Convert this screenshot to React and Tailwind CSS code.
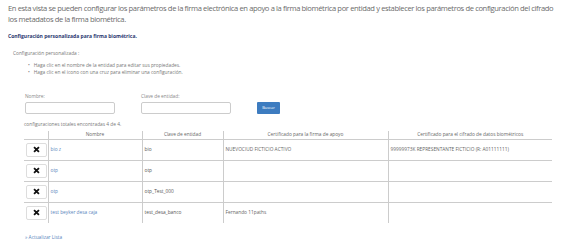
import React from "react";

const rows = [
  { name: "bio z", clave: "bio", firma: "NUEVOCIUD FICTICIO ACTIVO", cifrado: "99999973K REPRESENTANTE FICTICIO (R: A01111111)" },
  { name: "otp", clave: "otp", firma: "", cifrado: "" },
  { name: "otp", clave: "otp_Test_000", firma: "", cifrado: "" },
  { name: "test beyker desa caja", clave: "test_desa_banco", firma: "Fernando 11paths", cifrado: "" },
];

function XIcon() {
  return (
    <svg width="7" height="7" viewBox="0 0 10 10">
      <path d="M1.5 1.5 L8.5 8.5 M8.5 1.5 L1.5 8.5" stroke="#111" strokeWidth="2.6" strokeLinecap="butt" />
    </svg>
  );
}

export default function App() {
  return (
    <div className="w-[565px] h-[241px] bg-white overflow-hidden pl-[8px] pt-[3px]" style={{ fontFamily: '"Open Sans", sans-serif' }}>
      <p className="text-[7.6px] tracking-[-0.38px] leading-[10.5px] text-[#6b6b6b] whitespace-nowrap">
        En esta vista se pueden configurar los parámetros de la firma electrónica en apoyo a la firma biométrica por entidad y establecer los parámetros de configuración del cifrado
        <br />
        los metadatos de la firma biométrica.
      </p>
      <p className="mt-[9px] text-[5px] leading-[6px] font-bold text-[#2a3770]">Configuración personalizada para firma biométrica.</p>
      <p className="mt-[11px] ml-[5px] text-[4.8px] leading-[6px] text-[#777]">Configuración personalizada :</p>
      <ul className="mt-[6px] ml-[20px] text-[4.8px] leading-[6.5px] text-[#777]">
        <li className="flex gap-[4px]"><span>•</span><span>Haga clic en el nombre de la entidad para editar sus propiedades.</span></li>
        <li className="flex gap-[4px]"><span>•</span><span>Haga clic en el icono con una cruz para eliminar una configuración.</span></li>
      </ul>
      <div className="mt-[18px] ml-[17px] flex items-end">
        <div className="flex flex-col w-[116px]">
          <span className="text-[4.8px] leading-[6px] text-[#888]">Nombre:</span>
          <div className="mt-[3px] w-[90px] h-[12px] border border-[#ccc] rounded-[2px] bg-white" />
        </div>
        <div className="flex flex-col w-[116px]">
          <span className="text-[4.8px] leading-[6px] text-[#888]">Clave de entidad:</span>
          <div className="mt-[3px] w-[90px] h-[12px] border border-[#ccc] rounded-[2px] bg-white" />
        </div>
        <div className="w-[23px] h-[12px] bg-[#3d7cc0] rounded-[1px] flex items-center justify-center text-[4px] text-white">Buscar</div>
      </div>
      <p className="mt-[7px] ml-[16px] text-[4.8px] leading-[6px] text-[#777]">configuraciones totales encontradas 4 de 4.</p>
      <table className="mt-[4px] ml-[16px] w-[528px] border-collapse text-[4.8px] text-[#666]">
        <colgroup>
          <col className="w-[24px]" />
          <col className="w-[94px]" />
          <col className="w-[81px]" />
          <col className="w-[165px]" />
          <col className="w-[164px]" />
        </colgroup>
        <thead>
          <tr className="h-[8px] border-b border-[#ccc]">
            <th className="font-normal p-0"></th>
            <th className="font-normal p-0 border-l border-[#ccc] leading-[7px]">Nombre</th>
            <th className="font-normal p-0 border-l border-[#ccc] leading-[7px]">Clave de entidad</th>
            <th className="font-normal p-0 border-l border-[#ccc] leading-[7px]">Certificado para la firma de apoyo</th>
            <th className="font-normal p-0 border-l border-[#ccc] leading-[7px]">Certificado para el cifrado de datos biométricos</th>
          </tr>
        </thead>
        <tbody>
          {rows.map((r, i) => (
            <tr key={i} className={"h-[21px] " + (i < rows.length - 1 ? "border-b border-[#ccc]" : "")}>
              <td className="p-0 pl-[2px]">
                <div className="w-[21px] h-[14px] border border-[#ddd] rounded-[2px] bg-white flex items-center justify-center">
                  <XIcon />
                </div>
              </td>
              <td className="p-0 pl-[2px] border-l border-[#ccc] text-[#5a86bd]">{r.name}</td>
              <td className="p-0 pl-[2px] border-l border-[#ccc] text-[#555]">{r.clave}</td>
              <td className="p-0 pl-[2px] border-l border-[#ccc]">{r.firma}</td>
              <td className="p-0 pl-[2px] border-l border-[#ccc]">{r.cifrado}</td>
            </tr>
          ))}
        </tbody>
      </table>
      <p className="mt-[11px] ml-[17px] text-[4.8px] leading-[6px] text-[#5a86bd]">» Actualizar Lista</p>
    </div>
  );
}
